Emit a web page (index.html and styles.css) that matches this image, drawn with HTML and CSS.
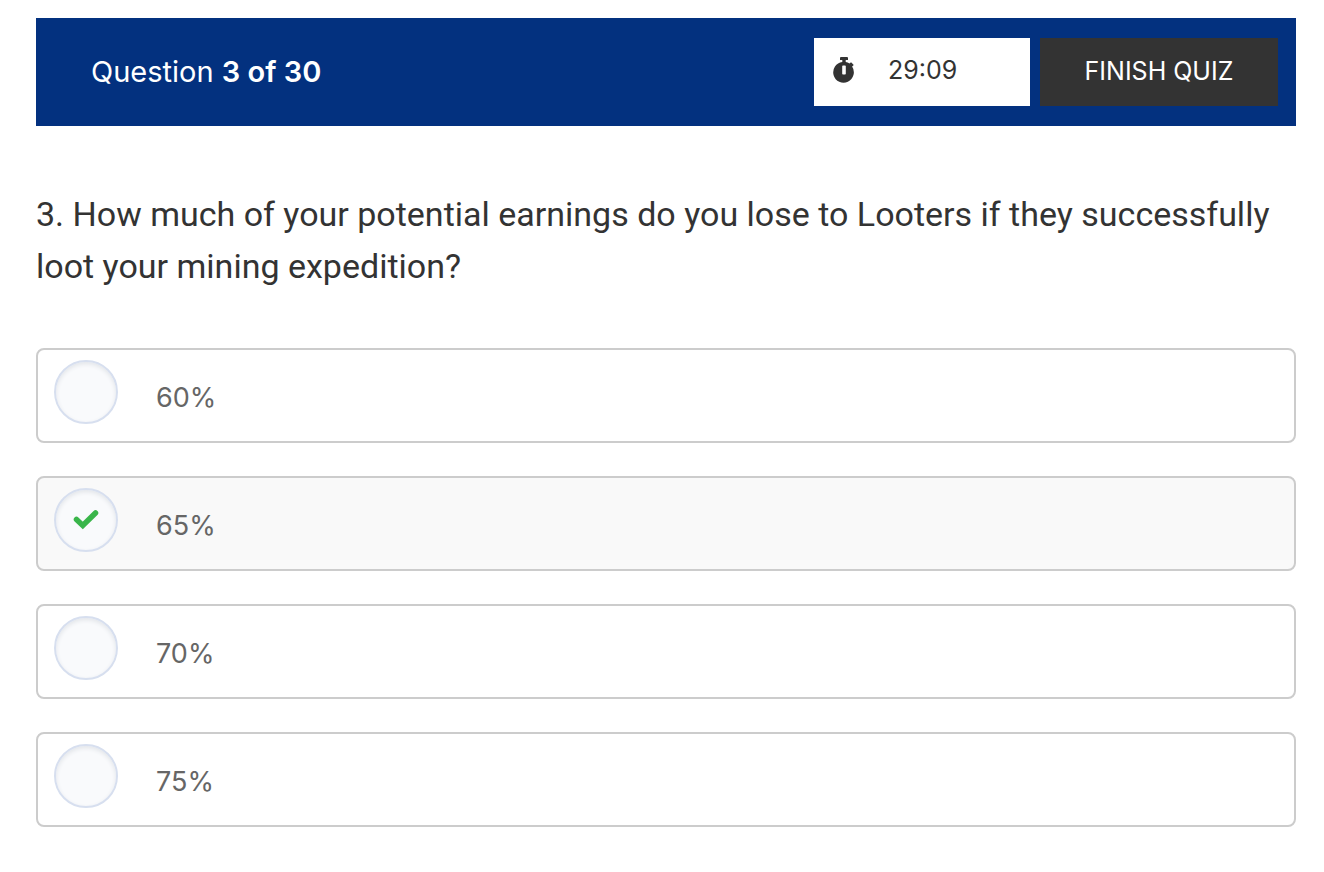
FILE: index.html
```html
<!DOCTYPE html>
<html lang="en">
<head>
<meta charset="utf-8">
<meta name="viewport" content="width=device-width, initial-scale=1">
<title>Quiz</title>
<link rel="stylesheet" href="styles.css">
</head>
<body>
<form class="quiz">
  <header class="bar">
    <p class="progress">Question <strong>3 of 30</strong></p>
    <div class="timer">
      <svg class="timer-icon" viewBox="0 0 22 26" aria-hidden="true">
        <path fill="#333" fill-rule="evenodd" d="M8 0h6q1 0 1 1v2h-2.300v2.100q2 .3 3.800 1.300L18 5.200l.6.500 1.700 1.700q.5.500 0 1l-1.200 1.200A10.300 10.300 0 1 1 9.300 5.100V3H7V1q0-1 1-1zM10 8.500q-.8 0-.8.800v7.400q0 .8.800.800h2q.8 0 .8-.8V9.300q0-.8-.8-.8z"/>
      </svg>
      <time class="time">29:09</time>
    </div>
    <button class="finish" type="button">FINISH QUIZ</button>
  </header>
  <fieldset class="question">
    <legend class="title">3. How much of your potential earnings do you lose to Looters if they successfully loot your mining expedition?</legend>
    <div class="answers">
      <label class="answer"><input class="radio" type="radio" name="answer"><span class="mark"></span><span class="text">60%</span></label>
      <label class="answer"><input class="radio" type="radio" name="answer" checked><span class="mark"><svg class="check" viewBox="0 0 26 20" aria-hidden="true"><path fill="none" stroke="#39b54a" stroke-width="5.500" stroke-linecap="round" d="M3.500 9.500l6.300 6L22.500 3"/></svg></span><span class="text">65%</span></label>
      <label class="answer"><input class="radio" type="radio" name="answer"><span class="mark"></span><span class="text">70%</span></label>
      <label class="answer"><input class="radio" type="radio" name="answer"><span class="mark"></span><span class="text">75%</span></label>
    </div>
  </fieldset>
</form>
</body>
</html>
```
FILE: styles.css
```css
* { box-sizing: border-box; }
body { margin: 0; background: #fff; color: #333; font-family: Inter, "Liberation Sans", sans-serif; }
.quiz { padding: 18px 28px 44px 36px; }
.bar { display: flex; align-items: center; gap: 10px; padding: 20px 18px 20px 55px; background: #03317f; }
.progress { flex: 1; margin: 0; color: #fff; font-size: 29px; line-height: 36px; }
.progress strong { font-weight: 600; }
.timer { display: flex; align-items: center; gap: 33px; width: 216px; height: 68px; padding: 0 20px 4px 19px; background: #fff; }
.timer-icon { width: 22px; height: 26px; }
.time { font-size: 25px; line-height: 32px; }
.finish { width: 238px; height: 68px; padding: 0 0 2px; border: 0; background: #333; color: #fff; font: 25px/32px Inter, "Liberation Sans", sans-serif; }
.question { min-width: 0; margin: 0; padding: 0; border: 0; }
.title { padding: 62px 0 56px; font-family: Roboto, "Liberation Sans", sans-serif; font-size: 34px; font-weight: 450; line-height: 52px; }
.answers { display: grid; gap: 33px; }
.answer { display: flex; align-items: flex-start; gap: 38px; padding: 10px 16px 17px; border: 2px solid #ccc; border-radius: 8px; }
.answer:has(:checked) { background: #f9f9f9; }
.radio { position: absolute; opacity: 0; }
.mark { display: grid; place-items: center; width: 64px; height: 64px; border: 2px solid #d7dfef; border-radius: 50%; background: #f9fafc; box-shadow: inset 0 2px 4px #e2e5e9; }
.check { width: 26px; height: 20px; }
.radio:focus-visible + .mark { outline: 2px solid #03317f; }
.text { padding-top: 20px; color: #666; font-size: 27px; line-height: 36px; }
```
